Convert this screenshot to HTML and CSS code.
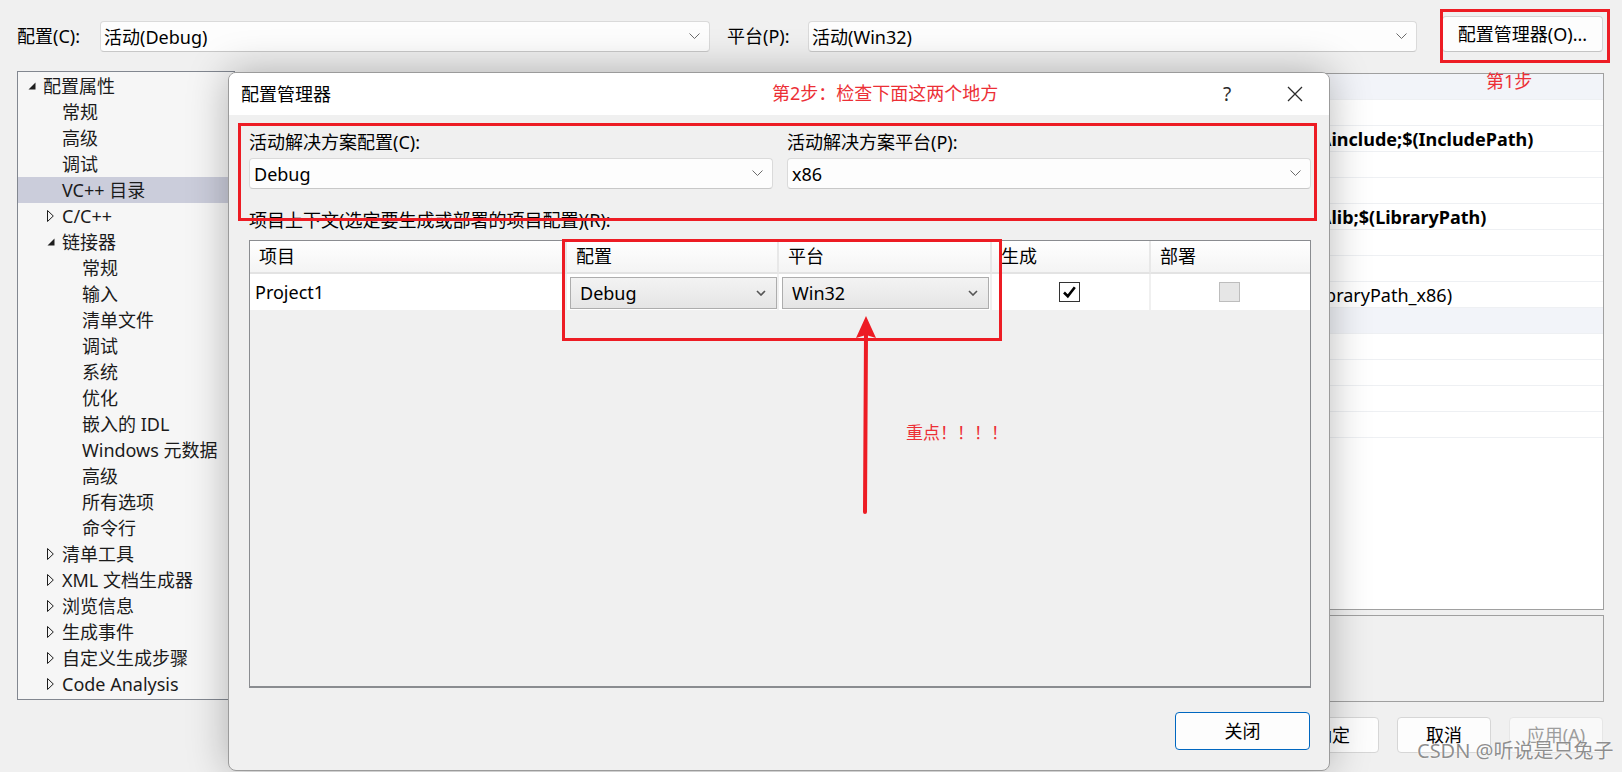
FILE: index.html
```html
<!DOCTYPE html>
<html lang="zh-CN">
<head>
<meta charset="utf-8">
<title>配置管理器</title>
<link rel="stylesheet" href="styles.css">
</head>
<body>
<div class="topbar">
  <span class="lbl lbl-c">配置(C):</span>
  <div class="combo combo-cfg"><span>活动(Debug)</span><svg class="chev" width="11" height="7" viewBox="0 0 11 7"><polyline points="0.5,0.5 5.5,5.5 10.5,0.5" fill="none" stroke="#6b6b6b" stroke-width="1"/></svg></div>
  <span class="lbl lbl-p">平台(P):</span>
  <div class="combo combo-plat"><span>活动(Win32)</span><svg class="chev" width="11" height="7" viewBox="0 0 11 7"><polyline points="0.5,0.5 5.5,5.5 10.5,0.5" fill="none" stroke="#6b6b6b" stroke-width="1"/></svg></div>
  <div class="btn-mgr">配置管理器(O)...</div>
</div>

<div class="main">
  <div class="tree">
    <div class="node l0"><span class="tw"><svg width="8" height="8" viewBox="0 0 8 8"><polygon points="7.5,0.5 7.5,7.5 0.5,7.5" fill="#1e1e1e"/></svg></span>配置属性</div>
    <div class="node l1"><span class="tw"></span>常规</div>
    <div class="node l1"><span class="tw"></span>高级</div>
    <div class="node l1"><span class="tw"></span>调试</div>
    <div class="node l1 sel"><span class="tw"></span>VC++ 目录</div>
    <div class="node l1"><span class="tw"><svg width="7" height="12" viewBox="0 0 7 12"><polygon points="0.5,0.5 6.3,6 0.5,11.5" fill="none" stroke="#1e1e1e" stroke-width="1"/></svg></span>C/C++</div>
    <div class="node l1"><span class="tw"><svg width="8" height="8" viewBox="0 0 8 8"><polygon points="7.5,0.5 7.5,7.5 0.5,7.5" fill="#1e1e1e"/></svg></span>链接器</div>
    <div class="node l2"><span class="tw"></span>常规</div>
    <div class="node l2"><span class="tw"></span>输入</div>
    <div class="node l2"><span class="tw"></span>清单文件</div>
    <div class="node l2"><span class="tw"></span>调试</div>
    <div class="node l2"><span class="tw"></span>系统</div>
    <div class="node l2"><span class="tw"></span>优化</div>
    <div class="node l2"><span class="tw"></span>嵌入的 IDL</div>
    <div class="node l2"><span class="tw"></span>Windows 元数据</div>
    <div class="node l2"><span class="tw"></span>高级</div>
    <div class="node l2"><span class="tw"></span>所有选项</div>
    <div class="node l2"><span class="tw"></span>命令行</div>
    <div class="node l1"><span class="tw"><svg width="7" height="12" viewBox="0 0 7 12"><polygon points="0.5,0.5 6.3,6 0.5,11.5" fill="none" stroke="#1e1e1e" stroke-width="1"/></svg></span>清单工具</div>
    <div class="node l1"><span class="tw"><svg width="7" height="12" viewBox="0 0 7 12"><polygon points="0.5,0.5 6.3,6 0.5,11.5" fill="none" stroke="#1e1e1e" stroke-width="1"/></svg></span>XML 文档生成器</div>
    <div class="node l1"><span class="tw"><svg width="7" height="12" viewBox="0 0 7 12"><polygon points="0.5,0.5 6.3,6 0.5,11.5" fill="none" stroke="#1e1e1e" stroke-width="1"/></svg></span>浏览信息</div>
    <div class="node l1"><span class="tw"><svg width="7" height="12" viewBox="0 0 7 12"><polygon points="0.5,0.5 6.3,6 0.5,11.5" fill="none" stroke="#1e1e1e" stroke-width="1"/></svg></span>生成事件</div>
    <div class="node l1"><span class="tw"><svg width="7" height="12" viewBox="0 0 7 12"><polygon points="0.5,0.5 6.3,6 0.5,11.5" fill="none" stroke="#1e1e1e" stroke-width="1"/></svg></span>自定义生成步骤</div>
    <div class="node l1"><span class="tw"><svg width="7" height="12" viewBox="0 0 7 12"><polygon points="0.5,0.5 6.3,6 0.5,11.5" fill="none" stroke="#1e1e1e" stroke-width="1"/></svg></span>Code Analysis</div>
  </div>

  <div class="right">
    <div class="pgrid">
      <div class="prow cat"><span></span><span class="pval"></span></div>
      <div class="prow"><span></span><span class="pval"></span></div>
      <div class="prow"><span></span><span class="pval b"><span class="cut">\</span>include;$(IncludePath)</span></div>
      <div class="prow"><span></span><span class="pval"></span></div>
      <div class="prow"><span></span><span class="pval"></span></div>
      <div class="prow"><span></span><span class="pval b"><span class="cut">\</span>lib;$(LibraryPath)</span></div>
      <div class="prow"><span></span><span class="pval"></span></div>
      <div class="prow"><span></span><span class="pval"></span></div>
      <div class="prow"><span></span><span class="pval"><span class="cut2">Lib</span>raryPath_x86)</span></div>
      <div class="prow cat"><span></span><span class="pval"></span></div>
      <div class="prow"><span></span><span class="pval"></span></div>
      <div class="prow"><span></span><span class="pval"></span></div>
      <div class="prow"><span></span><span class="pval"></span></div>
      <div class="prow"><span></span><span class="pval"></span></div>
    </div>
    <div class="desc"></div>
    <div class="btns">
      <div class="btn">确定</div>
      <div class="btn">取消</div>
      <div class="btn dis">应用(A)</div>
    </div>
  </div>
</div>

<div class="dialog">
  <div class="dtitle">
    <span>配置管理器</span>
    <div class="cap">
      <div class="capbtn help">?</div>
      <div class="capbtn"><svg width="16" height="16" viewBox="0 0 16 16"><path d="M1 1 L15 15 M15 1 L1 15" stroke="#2b2b2b" stroke-width="1.3" fill="none"/></svg></div>
    </div>
  </div>
  <div class="dbody">
    <div class="fields">
      <div class="field">
        <div class="flabel">活动解决方案配置(C):</div>
        <div class="combo dcombo"><span>Debug</span><svg class="chev" width="11" height="7" viewBox="0 0 11 7"><polyline points="0.5,0.5 5.5,5.5 10.5,0.5" fill="none" stroke="#6b6b6b" stroke-width="1"/></svg></div>
      </div>
      <div class="field">
        <div class="flabel">活动解决方案平台(P):</div>
        <div class="combo dcombo"><span>x86</span><svg class="chev" width="11" height="7" viewBox="0 0 11 7"><polyline points="0.5,0.5 5.5,5.5 10.5,0.5" fill="none" stroke="#6b6b6b" stroke-width="1"/></svg></div>
      </div>
    </div>
    <div class="flabel ctx">项目上下文(选定要生成或部署的项目配置)(R):</div>
    <div class="grid">
      <div class="grow ghead">
        <div class="gc">项目</div>
        <div class="gc">配置</div>
        <div class="gc">平台</div>
        <div class="gc">生成</div>
        <div class="gc last">部署</div>
      </div>
      <div class="grow gdata">
        <div class="gc gname">Project1</div>
        <div class="gc"><div class="gcombo gcombo-l"><span>Debug</span><svg width="10" height="6" viewBox="0 0 10 6"><polyline points="1,1 5,5 9,1" fill="none" stroke="#555" stroke-width="1.6"/></svg></div></div>
        <div class="gc"><div class="gcombo gcombo-r"><span>Win32</span><svg width="10" height="6" viewBox="0 0 10 6"><polyline points="1,1 5,5 9,1" fill="none" stroke="#555" stroke-width="1.6"/></svg></div></div>
        <div class="gc gchk"><svg width="21" height="20" viewBox="0 0 21 20"><rect x="0.5" y="0.5" width="20" height="19" fill="#fff" stroke="#333"/><path d="M5 10.5 L8.8 14.2 L15.8 5.2" fill="none" stroke="#000" stroke-width="2.6"/></svg></div>
        <div class="gc gchk last"><svg width="21" height="20" viewBox="0 0 21 20"><rect x="0.5" y="0.5" width="20" height="19" fill="#e6e6e6" stroke="#bdbdbd"/></svg></div>
      </div>
    </div>
    <div class="dfoot">
      <div class="closebtn">关闭</div>
    </div>
  </div>
</div>

<div class="rbox rb1"></div>
<div class="rbox rb2"></div>
<div class="rbox rb3"></div>
<div class="note n1">第1步</div>
<div class="note n2">第2步：检查下面这两个地方</div>
<div class="note n3">重点！！！！</div>
<svg class="arrow" width="30" height="210" viewBox="0 0 30 210">
  <line x1="15" y1="202" x2="16" y2="24" stroke="#ed1c24" stroke-width="4" stroke-linecap="round"/>
  <polygon points="16,6 6,28 16,25 26,28" fill="#ed1c24"/>
</svg>
<div class="wm">CSDN @听说是只兔子</div>
</body>
</html>
```
FILE: styles.css
```css
* { box-sizing: border-box; }

body {
  margin: 0;
  width: 1622px;
  height: 772px;
  overflow: hidden;
  position: relative;
  background: #f0f0f0;
  font-family: "Noto Sans", "Noto Sans CJK SC", sans-serif;
  font-size: 18px;
  line-height: 24px;
  color: #000;
}

/* ---------- top bar ---------- */
.topbar {
  display: flex;
  align-items: flex-end;
  height: 36px;
  margin-top: 16px;
  padding-left: 17px;
}
.lbl { height: 31px; line-height: 31px; white-space: nowrap; }
.lbl-c { width: 83px; }
.lbl-p { width: 81px; margin-left: 17px; }

.combo {
  height: 31px;
  display: flex;
  align-items: center;
  justify-content: space-between;
  background: #fdfdfd;
  border: 1px solid #dadada;
  border-bottom-color: #c8c8c8;
  border-radius: 4px;
  padding: 0 9px 0 3px;
  white-space: nowrap;
}
.combo-cfg { width: 610px; }
.combo-plat { width: 609px; }

.btn-mgr {
  margin-left: 25px;
  width: 161px;
  height: 36px;
  display: flex;
  align-items: center;
  justify-content: center;
  background: #fdfdfd;
  border: 1px solid #d4d4d4;
  border-bottom-color: #c4c4c4;
  border-radius: 4px;
  white-space: nowrap;
}

/* ---------- main window ---------- */
.main {
  display: flex;
  margin-top: 19px;
  padding-left: 17px;
}
.tree {
  width: 218px;
  height: 629px;
  border: 1px solid #828790;
  background: #f6f6f6;
  padding-top: 1px;
  flex: none;
}
.node {
  height: 26px;
  display: flex;
  align-items: center;
  white-space: nowrap;
  color: #1b1b1b;
}
.l0 { padding-left: 6px; }
.l1 { padding-left: 25px; }
.l2 { padding-left: 45px; }
.node.sel { background: #cbcddb; }
.tw {
  width: 19px;
  height: 26px;
  display: flex;
  align-items: center;
  flex: none;
}
.tw svg { margin-left: 4px; }

.right {
  margin-left: 8px;
  width: 1361px;
  margin-top: 2px;
  display: flex;
  flex-direction: column;
  flex: none;
}
.pgrid {
  height: 537px;
  border: 1px solid #a0a0a0;
  background: #fff;
  overflow: hidden;
}
.prow {
  height: 26px;
  border-bottom: 1px solid #eef0f3;
  display: grid;
  grid-template-columns: 1fr 274px;
  align-items: center;
}
.prow.cat { background: #f2f4f9; }
.pval { padding-left: 2px; white-space: nowrap; }
.pval.b { font-weight: 700; }
.cut { margin-left: -7px; }
.cut2 { margin-left: -20px; }

.desc {
  margin-top: 5px;
  height: 87px;
  border: 1px solid #a0a0a0;
  background: #f0f0f0;
}
.btns {
  margin-top: 15px;
  display: flex;
  justify-content: flex-end;
  gap: 18px;
  padding-right: 1px;
}
.btn {
  width: 94px;
  height: 36px;
  display: flex;
  align-items: center;
  justify-content: center;
  background: #fdfdfd;
  border: 1px solid #d6d6d6;
  border-radius: 4px;
}
.btn.dis { color: #9d9d9d; border-color: #e6e6e6; background: #f9f9f9; }

/* ---------- dialog ---------- */
.dialog {
  position: absolute;
  left: 228px;
  top: 72px;
  width: 1102px;
  height: 699px;
  border: 1px solid #9b9b9b;
  border-radius: 8px;
  background: #f0f0f0;
  box-shadow: 0 0 40px rgba(0, 0, 0, 0.28);
  overflow: hidden;
}
.dtitle {
  height: 42px;
  background: #fff;
  display: flex;
  align-items: center;
  padding-left: 12px;
}
.cap { margin-left: auto; display: flex; height: 100%; }
.capbtn {
  width: 68px;
  display: flex;
  align-items: center;
  justify-content: center;
  color: #2b2b2b;
}
.capbtn.help { font-size: 19px; }

.dbody { padding: 15px 18px 0 20px; }
.fields {
  display: grid;
  grid-template-columns: 1fr 1fr;
  column-gap: 14px;
}
.flabel { height: 24px; white-space: nowrap; }
.dcombo { margin-top: 4px; padding-left: 4px; padding-right: 9px; }
.ctx { margin-top: 19px; }

.grid {
  margin-top: 8px;
  height: 448px;
  border: 1px solid #8a8c90;
  border-bottom-width: 2px;
  background: #f0f0f0;
}
.grow {
  display: grid;
  grid-template-columns: 317px 212px 213px 159px 1fr;
}
.ghead .gc {
  height: 33px;
  line-height: 31px;
  padding-left: 9px;
  background: linear-gradient(#ffffff, #f4f4f4);
  border-right: 2px solid #e8e8e8;
  border-bottom: 2px solid #e3e3e3;
}
.gdata .gc {
  height: 36px;
  background: #fff;
  border-right: 2px solid #f0f0f0;
  display: flex;
  align-items: center;
}
.grow .gc.last { border-right: none; }
.gdata .gname { padding-left: 5px; }
.gdata .gchk { justify-content: center; padding-right: 2px; }

.gcombo {
  flex: 1;
  height: 32px;
  margin-top: 2px;
  display: flex;
  align-items: center;
  justify-content: space-between;
  padding: 0 10px 0 9px;
  border: 1px solid #adadad;
  background: linear-gradient(#f3f3f3, #e5e5e5);
}
.gcombo-l { margin-left: 3px; }
.gcombo-r { margin-left: 3px; margin-right: 1px; }

.dfoot {
  display: flex;
  justify-content: flex-end;
  margin-top: 24px;
  padding-right: 1px;
}
.closebtn {
  width: 135px;
  height: 38px;
  border: 1px solid #0067c0;
  border-radius: 4px;
  background: #fdfdfd;
  display: flex;
  align-items: center;
  justify-content: center;
}

/* ---------- annotations ---------- */
.rbox { position: absolute; border: 3px solid #ed1c24; }
.rb1 { left: 1440px; top: 9px; width: 170px; height: 54px; }
.rb2 { left: 238px; top: 123px; width: 1079px; height: 98px; }
.rb3 { left: 562px; top: 239px; width: 440px; height: 102px; }

.note {
  position: absolute;
  color: #ec2f36;
  font-size: 18px;
  line-height: 24px;
  white-space: nowrap;
}
.n1 { left: 1486px; top: 69px; }
.n2 { left: 772px; top: 81px; }
.n3 { left: 906px; top: 421px; font-size: 17px; }

.arrow { position: absolute; left: 850px; top: 310px; }

.wm {
  position: absolute;
  left: 1417px;
  top: 738px;
  font-size: 20px;
  line-height: 26px;
  white-space: nowrap;
  color: rgba(105, 105, 105, 0.75);
  text-shadow: 0 0 1px #fff, 0 0 2px #fff;
}
```
